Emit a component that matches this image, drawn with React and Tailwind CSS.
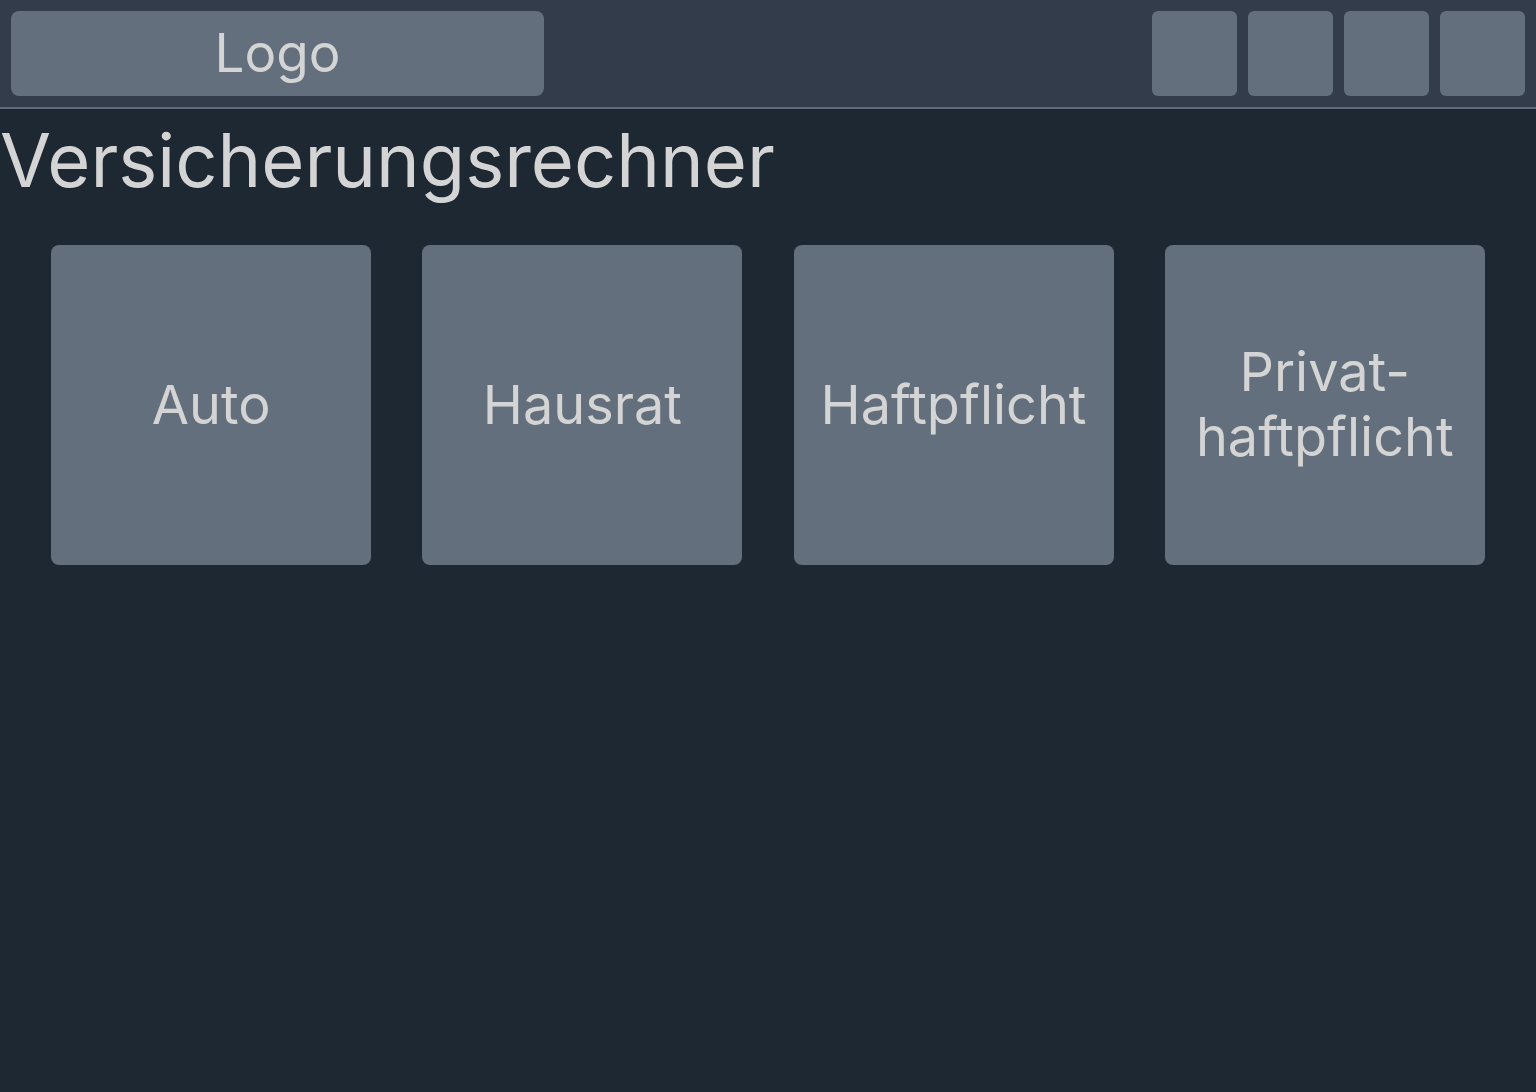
import React from "react";

const cards = ["Auto", "Hausrat", "Haftpflicht", "Privat-\nhaftpflicht"];

export default function App() {
  return (
    <div
      className="min-h-[1092px] bg-[#1e2833] text-[#d4d4d4]"
      style={{ fontFamily: "Inter, 'Noto Sans', sans-serif" }}
    >
      <header className="flex items-center justify-between bg-[#323c4a] p-[11px] border-b-2 border-[#5f6b78]">
        <div className="flex h-[85px] w-[533px] items-center justify-center rounded-lg bg-[#636f7c] text-[53px] leading-none">
          Logo
        </div>
        <div className="flex gap-[11px]">
          {[0, 1, 2, 3].map((i) => (
            <div key={i} className="h-[85px] w-[85px] rounded-md bg-[#636f7c]" />
          ))}
        </div>
      </header>

      <h1 className="pt-[14px] text-[74px] leading-none">Versicherungsrechner</h1>

      <div className="mt-[48px] flex justify-evenly">
        {cards.map((c) => (
          <div
            key={c}
            className="flex h-[320px] w-[320px] items-center justify-center rounded-lg bg-[#636f7c] text-center text-[54px] leading-[1.2] whitespace-pre-line"
          >
            {c}
          </div>
        ))}
      </div>
    </div>
  );
}
